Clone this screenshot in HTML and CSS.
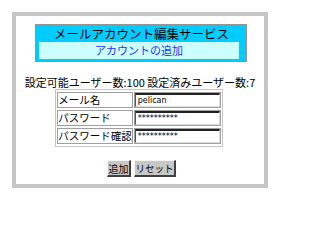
FILE: index.html
```html
<!DOCTYPE html>
<html lang="ja">
<head>
<meta charset="utf-8">
<title>メールアカウント編集サービス</title>
<link rel="stylesheet" href="styles.css">
</head>
<body>
<div class="frame">
  <div class="header">
    <div class="title">メールアカウント編集サービス</div>
    <div class="subtitle">アカウントの追加</div>
  </div>
  <p class="count">設定可能ユーザー数:100 設定済みユーザー数:7</p>
  <table class="form">
    <tr>
      <td class="label">メール名</td>
      <td class="field"><input class="input" type="text" value="pelican"></td>
    </tr>
    <tr>
      <td class="label">パスワード</td>
      <td class="field"><input class="input" type="text" value="**********"></td>
    </tr>
    <tr>
      <td class="label">パスワード確認</td>
      <td class="field"><input class="input" type="text" value="**********"></td>
    </tr>
  </table>
  <div class="buttons">
    <button class="btn btn-add" type="button">追加</button>
    <button class="btn btn-reset" type="button">リセット</button>
  </div>
</div>
</body>
</html>
```
FILE: styles.css
```css
html, body {
  margin: 0;
  padding: 0;
  background: #ffffff;
}
body {
  font-family: "Noto Sans CJK JP", "Noto Sans", sans-serif;
  color: #000000;
}
.frame {
  margin: 12px 0 0 12px;
  width: 248px;
  height: 160px;
  border: 4px solid #c6c6c6;
  padding-top: 8px;
  box-sizing: content-box;
}
.header {
  width: 205px;
  margin: 0 auto 0 auto;
  border: 1px solid #9a9090;
  background: #00ccff;
  padding: 0 2px 2px 3px;
  box-sizing: content-box;
  position: relative;
  left: 1px;
}
.title {
  height: 17px;
  line-height: 18px;
  font-size: 12.5px;
  text-align: center;
  white-space: nowrap;
}
.subtitle {
  width: 200px;
  height: 17px;
  line-height: 17px;
  background: #ccffff;
  color: #2233ff;
  font-size: 11px;
  text-align: center;
}
.count {
  margin: 13px 0 0 0;
  height: 14px;
  line-height: 14px;
  font-size: 11px;
  text-align: center;
  white-space: nowrap;
}
.form {
  margin: 0 auto 0 auto;
  border: 1px solid #c4c4c4;
  border-spacing: 1px 2px;
  position: relative;
  left: -1px;
}
.form td {
  border: 1px solid #a0a0a0;
  padding: 0;
  height: 14px;
}
.label {
  width: 73px;
  font-size: 10.5px;
  line-height: 14px;
  white-space: nowrap;
  overflow: hidden;
}
.field {
  width: 85px;
}
.input {
  display: block;
  width: 85px;
  height: 14px;
  box-sizing: border-box;
  margin: 0;
  padding: 0 0 0 2px;
  border-style: solid;
  border-width: 2px 1px 1px 1px;
  border-color: #222222 #dddddd #dddddd #555555;
  font-family: "DejaVu Sans", sans-serif;
  font-size: 8px;
  line-height: 10px;
  color: #000000;
  background: #ffffff;
}
.buttons {
  margin-top: 13px;
  display: flex;
  justify-content: center;
  gap: 3px;
  padding-left: 3px;
}
.btn {
  height: 17px;
  margin: 0;
  padding: 0;
  font-family: "Noto Sans CJK JP", sans-serif;
  font-size: 10px;
  line-height: 13px;
  color: #000000;
  background: #c8c8c8;
  border-style: solid;
  border-width: 1px 2px 2px 1px;
  border-color: #f4f4f4 #404040 #404040 #f4f4f4;
  white-space: nowrap;
  text-align: center;
}
.btn-add {
  width: 24px;
}
.btn-reset {
  width: 42px;
  font-size: 9.5px;
}
```
